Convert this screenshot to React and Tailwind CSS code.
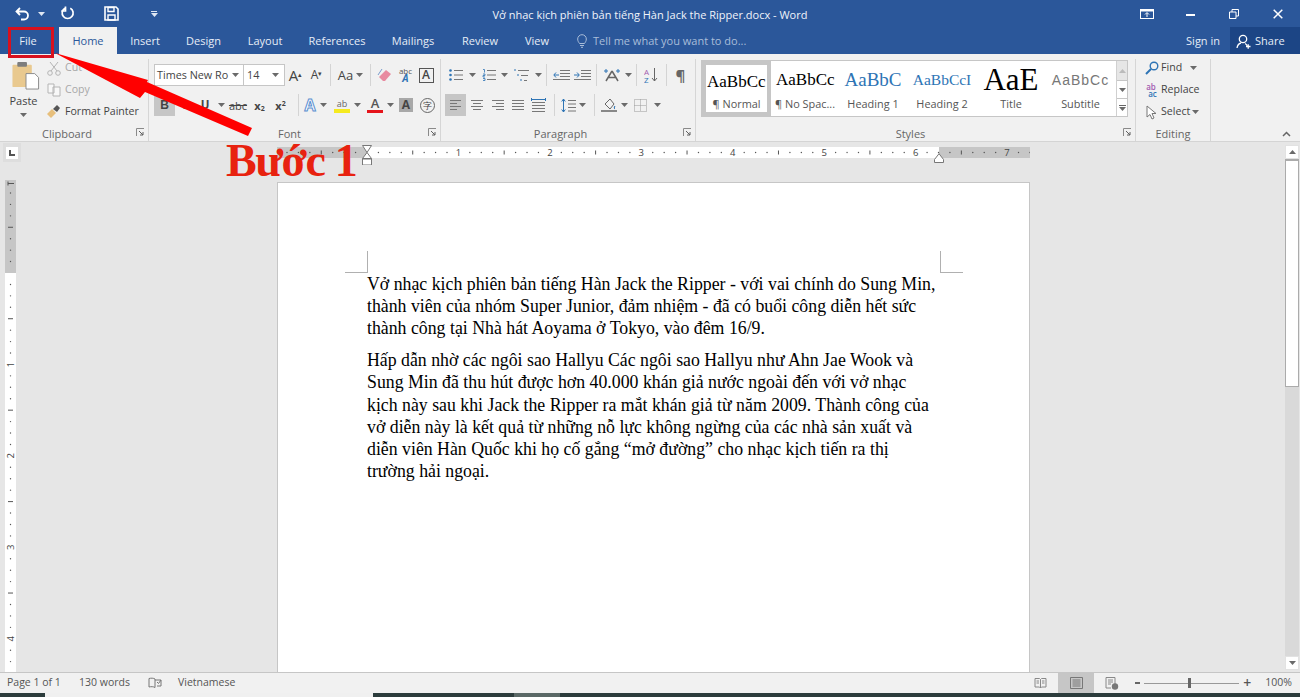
import React from "react";

const UI = "font-['Open_Sans',sans-serif]";

function Caret({ c = "#6a6a6a" }) {
  return <svg width="7" height="4" viewBox="0 0 7 4" className="shrink-0"><path d="M0 0h7L3.5 4z" fill={c} /></svg>;
}
function Sep() {
  return <div className="w-px h-[22px] bg-[#d4d4d4] mx-[3px] shrink-0" />;
}
function Cell({ w, children, active }) {
  return <div className={`${w} h-[22px] flex items-center justify-center shrink-0 ${active ? "bg-[#c6c6c6]" : ""}`}>{children}</div>;
}
function Launcher() {
  return (
    <svg width="9" height="9" viewBox="0 0 9 9" className="shrink-0">
      <path d="M.5 8V.5H8" fill="none" stroke="#8a8a8a" />
      <path d="M3 3l4 4M7 4v3H4" fill="none" stroke="#5f5f5f" />
    </svg>
  );
}
function Lines({ kind }) {
  const rows = {
    left: [[1, 12], [1, 8], [1, 12], [1, 8]],
    center: [[1, 13], [3, 11], [1, 13], [3, 11]],
    right: [[1, 13], [5, 13], [1, 13], [5, 13]],
    justify: [[1, 13], [1, 13], [1, 13], [1, 13]],
  }[kind];
  return (
    <svg width="14" height="12" viewBox="0 0 14 12">
      {rows.map((r, i) => <path key={i} d={`M${r[0]} ${1.5 + i * 3}H${r[1]}`} stroke="#777" strokeWidth="1" />)}
    </svg>
  );
}
function Group({ w, label, launcher, children }) {
  return (
    <div className={`${w} h-full shrink-0 flex flex-col border-r border-[#d6d6d6]`}>
      <div className="flex-1 min-h-0">{children}</div>
      <div className="relative h-[18px] pt-[2px] flex items-center justify-center text-[11px] leading-none text-[#666]">
        {label}
        {launcher && <span className="absolute right-[3px] top-[5px] flex"><Launcher /></span>}
      </div>
    </div>
  );
}
function SmallBtn({ icon, text, grey, caret, gap = "gap-[4px]" }) {
  return (
    <div className={`h-[22px] flex items-center ${gap} text-[10.6px] ${grey ? "text-[#a8a8a8]" : "text-[#444]"}`}>
      <span className="w-[15px] h-[16px] flex items-center justify-center shrink-0">{icon}</span>
      <span className="whitespace-nowrap">{text}</span>
      {caret}
    </div>
  );
}
function StyleItem({ w, preview, label, selected, left }) {
  return (
    <div className={`${w} h-full shrink-0 flex flex-col items-center overflow-hidden ${selected ? "border-[4px] border-[#c6c6c6]" : ""}`}>
      <div className={`${selected ? "h-[34px]" : "h-[38px]"} w-full overflow-hidden flex items-center ${left ? "justify-start" : "justify-center"} whitespace-nowrap`}>{preview}</div>
      <div className="text-[10.9px] leading-none text-[#555] whitespace-nowrap">{label}</div>
    </div>
  );
}
function Tab({ children, w, active }) {
  return (
    <div className={`${w} h-full pt-[1px] flex items-center justify-center shrink-0 text-[11px] ${active ? "bg-[#f1f1f1] text-[#2b579a]" : "text-[#e6edf7]"}`}>{children}</div>
  );
}

function HRuler() {
  const ticks = [];
  for (let i = -11; i < 59; i++) {
    const x = 90 + i * 11.43;
    if (i === 0) continue;
    if (i % 8 === 0 && i > 0) {
      ticks.push(<text key={i} x={x} y="9" fontSize="9.5" textAnchor="middle" fill="#444" fontFamily="Open Sans">{i / 8}</text>);
    } else if (i % 4 === 0) {
      ticks.push(<path key={i} d={`M${x} 3.5v4`} stroke="#555" />);
    } else {
      ticks.push(<circle key={i} cx={x} cy="5.5" r=".7" fill="#555" />);
    }
  }
  return (
    <svg width="753" height="11" viewBox="0 0 753 11" className="block">
      <rect x="0" width="753" height="11" fill="#c6c6c6" />
      <rect x="90" width="572" height="11" fill="#fff" />
      {ticks}
    </svg>
  );
}
function VRuler() {
  const ticks = [];
  for (let i = -7; i < 36; i++) {
    const y = 93 + i * 11.43;
    if (i === 0) continue;
    if (i % 8 === 0) {
      ticks.push(<text key={i} x="0" y="0" fontSize="9.5" textAnchor="middle" fill="#444" fontFamily="Open Sans" transform={`translate(8.5 ${y}) rotate(-90)`}>{i / 8}</text>);
    } else if (i % 4 === 0) {
      ticks.push(<path key={i} d={`M3 ${y}h5`} stroke="#555" />);
    } else {
      ticks.push(<circle key={i} cx="5.5" cy={y} r=".7" fill="#555" />);
    }
  }
  return (
    <svg width="11" height="492" viewBox="0 0 11 492" className="block">
      <rect width="11" height="492" fill="#fff" />
      <rect width="11" height="93" fill="#c6c6c6" />
      <path d="M3 3.5h6M3 1.5v4" stroke="#555" />
      {ticks}
    </svg>
  );
}

export default function App() {
  return (
    <div className={`relative w-[1300px] h-[697px] overflow-hidden flex flex-col bg-[#e6e6e6] ${UI}`}>
      {/* Title bar */}
      <div className="h-[27px] shrink-0 bg-[#2b579a] flex items-center text-white relative">
        <div className="w-[38px] pl-[15px] flex items-center">
          <svg width="15" height="14" viewBox="0 0 15 14"><path d="M5 1L1.5 4.5 5 8M2 4.5h7a4 4 0 0 1 0 8H6" fill="none" stroke="#fff" strokeWidth="1.8" /></svg>
        </div>
        <Caret c="#dfe7f3" />
        <div className="ml-[15px] w-[18px]">
          <svg width="15" height="15" viewBox="0 0 15 15"><path d="M5 2.2a5.5 5.5 0 1 0 5.3 0M5.5 .5v4.5H1.2" fill="none" stroke="#fff" strokeWidth="1.7" /></svg>
        </div>
        <div className="ml-[26px] w-[15px]">
          <svg width="15" height="15" viewBox="0 0 15 15"><path d="M1 1h11l2 2v11H1z" fill="none" stroke="#fff" strokeWidth="1.6" /><path d="M4 1.5h6v4H4zM4 9h7v5H4z" fill="none" stroke="#fff" strokeWidth="1.4" /></svg>
        </div>
        <div className="ml-[31px] w-[8px] flex flex-col items-center gap-[1px]">
          <div className="w-[6px] h-px bg-[#dfe7f3]" /><Caret c="#dfe7f3" />
        </div>
        <div className="absolute left-[0px] right-[0px] top-[0px] h-full flex items-center justify-center pt-[4px] text-[11px] text-[#f0f4fa] pointer-events-none">
          <span>Vở nhạc kịch phiên bản tiếng Hàn Jack the Ripper.docx - Word</span>
        </div>
        <div className="ml-auto flex items-center">
          <div className="w-[14px] mr-[32px]">
            <svg width="14" height="10" viewBox="0 0 14 10"><rect x=".5" y=".5" width="13" height="9" fill="none" stroke="#fff" /><rect x=".5" y=".5" width="13" height="2" fill="#fff" /><path d="M7 8V4M5 5.5L7 3.5l2 2" stroke="#fff" fill="none" /></svg>
          </div>
          <div className="w-[9px] h-[2px] bg-white mr-[34px] mt-[3px]" />
          <div className="mr-[34px]">
            <svg width="10" height="10" viewBox="0 0 10 10"><path d="M.5 3h6.5v6.500H.5zM3 3V.5h6.500V7H7" fill="none" stroke="#fff" /></svg>
          </div>
          <div className="mr-[17px]">
            <svg width="10" height="10" viewBox="0 0 10 10"><path d="M.7.7l8.600 8.600M9.300.7L.7 9.300" stroke="#fff" strokeWidth="1.500" /></svg>
          </div>
        </div>
      </div>

      {/* Tabs */}
      <div className="h-[27px] shrink-0 bg-[#2b579a] flex items-stretch">
        <Tab w="w-[56px]">File</Tab>
        <div className="w-[3px] shrink-0" />
        <Tab w="w-[58px]" active>Home</Tab>
        <Tab w="w-[56px]">Insert</Tab>
        <Tab w="w-[61px]">Design</Tab>
        <Tab w="w-[62px]">Layout</Tab>
        <Tab w="w-[82px]">References</Tab>
        <Tab w="w-[70px]">Mailings</Tab>
        <Tab w="w-[64px]">Review</Tab>
        <Tab w="w-[50px]">View</Tab>
        <div className="flex items-center gap-[6px] ml-[15px] pt-[1px] text-[11px] text-[#a9bdd9]">
          <svg width="10" height="14" viewBox="0 0 10 14"><path d="M2.500 9.500C1.500 8 .7 7 .7 5a4.300 4.300 0 0 1 8.600 0c0 2-.8 3-1.800 4.500zM3 11.500h4M4 13.300h2" fill="none" stroke="#a9bdd9" /></svg>
          <span>Tell me what you want to do...</span>
        </div>
        <div className="ml-auto flex items-stretch">
          <div className="flex items-center pr-[10px] pt-[1px] text-[11px] text-[#e6edf7]">Sign in</div>
          <div className="w-[70px] bg-[#1c4585] flex items-center gap-[4px] pl-[6px] pt-[1px] text-[11px] text-[#e6edf7]">
            <svg width="15" height="15" viewBox="0 0 15 15"><circle cx="7" cy="5" r="3.700" fill="none" stroke="#fff" strokeWidth="1.300" /><path d="M1 14c.5-3 2-4.500 4-5M9 9.500c1 .5 1.500 1 2 2M10 12.500h4.500M12.200 10.300v4.400" fill="none" stroke="#fff" strokeWidth="1.300" /></svg>
            <span>Share</span>
          </div>
        </div>
      </div>

      {/* Ribbon */}
      <div className="h-[88px] shrink-0 bg-[#f1f1f1] border-b border-[#d4d4d4] flex pt-[5px] text-[#444]">
        {/* Clipboard */}
        <Group w="w-[149px]" label={<span className="mr-[14px]">Clipboard</span>} launcher>
          <div className="flex h-full">
            <div className="w-[47px] flex flex-col items-center pt-[2px]">
              <svg width="28" height="29" viewBox="0 0 28 30" className="ml-[4px]">
                <rect x="0" y="4" width="20" height="23" rx="1" fill="#e9c98f" />
                <rect x="5" y="1" width="10" height="5" rx="1" fill="#7d7d7d" />
                <path d="M14 13h9l4 4v12H14z" fill="#fff" stroke="#8a8a8a" />
              </svg>
              <div className="text-[11px] leading-none mt-[5px]">Paste</div>
              <div className="mt-[7px]"><Caret /></div>
            </div>
            <div className="flex flex-col mt-[-2px] ml-[-1px]">
              <SmallBtn grey text="Cut" icon={<svg width="14" height="15" viewBox="0 0 14 15"><circle cx="3" cy="12" r="2.300" fill="none" stroke="#b4b4b4" /><circle cx="11" cy="12" r="2.300" fill="none" stroke="#b4b4b4" /><path d="M4 10L11 1M10 10L3 1" stroke="#b4b4b4" /></svg>} />
              <SmallBtn grey text="Copy" icon={<svg width="14" height="14" viewBox="0 0 14 14"><path d="M1 1h6v9H1zM6 4h7v9H6z" fill="#f8f8f8" stroke="#b4b4b4" /></svg>} />
              <SmallBtn text="Format Painter" icon={<svg width="15" height="14" viewBox="0 0 15 14"><path d="M1 9l5-5 4 4-5 5z" fill="#e7bf7c" /><path d="M7 4l4-4 3 3-3 4z" fill="#555" /></svg>} />
            </div>
          </div>
        </Group>

        {/* Font */}
        <Group w="w-[292px]" label={<span className="ml-[-10px]">Font</span>} launcher>
          <div className="pl-[5px] flex flex-col pt-[4px] gap-[7px]">
            <div className="flex items-center h-[24px]">
              <div className="w-[90px] h-[22px] bg-white border border-[#c6c6c6] flex items-center justify-between pl-[2px] pr-[4px] text-[10.8px] text-[#444] whitespace-nowrap">Times New Ro<Caret /></div>
              <div className="w-[41px] h-[22px] bg-white border border-l-0 border-[#c6c6c6] flex items-center justify-between pl-[3px] pr-[5px] text-[10.8px]">14<Caret /></div>
              <Cell w="w-[21px]"><span className="text-[15px] leading-none">A<sup className="text-[7px]">▴</sup></span></Cell>
              <Cell w="w-[21px]"><span className="text-[12px] leading-none">A<sup className="text-[7px]">▾</sup></span></Cell>
              <Sep />
              <Cell w="w-[33px]"><span className="flex items-center gap-[3px] text-[13px] leading-none">Aa<Caret /></span></Cell>
              <Sep />
              <Cell w="w-[21px]">
                <svg width="16" height="14" viewBox="0 0 16 14"><path d="M6 13l-4-4 7-7 5 4-6 7z" fill="#e88aa0" /><path d="M1 7l4-6" stroke="#7a9ccc" /></svg>
              </Cell>
              <Cell w="w-[21px]"><span className="flex flex-col items-center text-[8px] leading-[7px] text-[#555]">abc<b className="text-[#2e74b5] italic text-[10px] leading-[9px]">A</b></span></Cell>
              <Cell w="w-[20px]"><span className="w-[15px] h-[15px] border border-[#555] flex items-center justify-center text-[12px] leading-none font-semibold">A</span></Cell>
            </div>
            <div className="flex items-center h-[22px]">
              <Cell w="w-[21px]" active><b className="text-[12px] leading-none font-['Liberation_Sans',sans-serif]">B</b></Cell>
              <Cell w="w-[20px]"><i className="text-[12px] leading-none font-['Liberation_Serif',serif]">I</i></Cell>
              <Cell w="w-[20px]"><b className="underline text-[11.5px] leading-none">U</b></Cell>
              <Cell w="w-[12px]"><Caret /></Cell>
              <Cell w="w-[22px]"><span className="line-through text-[11px] leading-none">abc</span></Cell>
              <Cell w="w-[21px]"><b className="text-[11px] leading-none">x<sub className="text-[7px]">2</sub></b></Cell>
              <Cell w="w-[21px]"><b className="text-[11px] leading-none">x<sup className="text-[7px]">2</sup></b></Cell>
              <div className="ml-[4px]"><Sep /></div>
              <Cell w="w-[16px]"><b className="text-[16px] leading-none text-white [-webkit-text-stroke:1px_#5b8fd0]">A</b></Cell>
              <Cell w="w-[10px]"><Caret /></Cell>
              <Cell w="w-[24px] ml-[2px]">
                <span className="flex flex-col items-center leading-none">
                  <span className="text-[9px] leading-[11px] text-[#666]">ab</span>
                  <span className="w-[16px] h-[4px] bg-[#f5ea1f]" />
                </span>
              </Cell>
              <Cell w="w-[6px]"><Caret /></Cell>
              <Cell w="w-[24px] ml-[3px]">
                <span className="flex flex-col items-center leading-none">
                  <span className="text-[13px] leading-[13px] font-semibold text-[#555]">A</span>
                  <span className="w-[16px] h-[3px] bg-[#e5141b]" />
                </span>
              </Cell>
              <Cell w="w-[6px]"><Caret /></Cell>
              <Cell w="w-[26px]"><span className="w-[14px] h-[14px] bg-[#a8a8a8] flex items-center justify-center text-[12px] font-bold leading-none text-[#444]">A</span></Cell>
              <Cell w="w-[16px]"><span className="w-[15px] h-[15px] rounded-full border border-[#666] flex items-center justify-center text-[9px] leading-none">字</span></Cell>
            </div>
          </div>
        </Group>

        {/* Paragraph */}
        <Group w="w-[255px]" label={<span className="ml-[-15px]">Paragraph</span>} launcher>
          <div className="pl-[4px] flex flex-col pt-[4px] gap-[7px]">
            <div className="flex items-center h-[24px]">
              <Cell w="w-[22px]"><svg width="14" height="12" viewBox="0 0 14 12"><path d="M5 1.500h9M5 6h9M5 10.500h9" stroke="#777" /><circle cx="1.500" cy="1.500" r="1.300" fill="#2e74b5" /><circle cx="1.500" cy="6" r="1.300" fill="#2e74b5" /><circle cx="1.500" cy="10.500" r="1.300" fill="#2e74b5" /></svg></Cell>
              <Cell w="w-[11px]"><Caret /></Cell>
              <Cell w="w-[22px]"><svg width="14" height="12" viewBox="0 0 14 12"><path d="M5 1.500h9M5 6h9M5 10.500h9" stroke="#777" /><path d="M1 .5h1.500v3M1 5h2v1.500H1V8h2M1 9.500h2v2H1" fill="none" stroke="#2e74b5" strokeWidth=".8" /></svg></Cell>
              <Cell w="w-[9px]"><Caret /></Cell>
              <Cell w="w-[24px]"><svg width="16" height="13" viewBox="0 0 16 13"><path d="M5 1.500h11M8 6.500h7M11 11.500h3" stroke="#777" /><path d="M1 1h2M4 6h2M7 11h2" stroke="#2e74b5" /></svg></Cell>
              <Cell w="w-[10px]"><Caret /></Cell>
              <Sep />
              <Cell w="w-[22px]"><svg width="17" height="12" viewBox="0 0 17 12"><path d="M7 1.500h10M7 4.500h10M7 7.500h10M0 10.500h17" stroke="#777" /><path d="M6 6H1M3 3.500L.8 6 3 8.500" fill="none" stroke="#2e74b5" /></svg></Cell>
              <Cell w="w-[21px]"><svg width="17" height="12" viewBox="0 0 17 12"><path d="M7 1.500h10M7 4.500h10M7 7.500h10M0 10.500h17" stroke="#777" /><path d="M0 6h5M3 3.500L5.300 6 3 8.500" fill="none" stroke="#2e74b5" /></svg></Cell>
              <Sep />
              <Cell w="w-[24px]"><svg width="18" height="14" viewBox="0 0 18 14"><path d="M9 3L3 13M9 3l6 10M5 9.500h8" fill="none" stroke="#666" strokeWidth="1.500" /><path d="M1 3h4M13 3h4M3 1v4M15 1v4" stroke="#2e74b5" /></svg></Cell>
              <Cell w="w-[8px]"><Caret /></Cell>
              <div className="ml-[1px]"><Sep /></div>
              <Cell w="w-[22px]"><svg width="14" height="17" viewBox="0 0 14 17"><text x="0" y="8" fontSize="8" fill="#a25bb0" fontFamily="Open Sans">A</text><text x="0" y="16" fontSize="8" fill="#2e74b5" fontFamily="Open Sans">Z</text><path d="M10.500 1v13M8 11l2.500 3 2.500-3" fill="none" stroke="#666" /></svg></Cell>
              <div className="ml-[1px]"><Sep /></div>
              <Cell w="w-[21px]"><span className="text-[15px] font-bold leading-none text-[#666]">¶</span></Cell>
            </div>
            <div className="flex items-center h-[22px]">
              <Cell w="w-[21px]" active><Lines kind="left" /></Cell>
              <Cell w="w-[21px]"><Lines kind="center" /></Cell>
              <Cell w="w-[21px]"><Lines kind="right" /></Cell>
              <Cell w="w-[20px]"><Lines kind="justify" /></Cell>
              <Cell w="w-[21px]"><svg width="15" height="15" viewBox="0 0 15 15"><path d="M1 4.500h13M1 7.500h13M1 10.500h13M1 13.500h13" stroke="#777" /><path d="M.5 0v3M14.500 0v3M1 1.500h13" stroke="#2e74b5" /></svg></Cell>
              <div className="ml-[2px]"><Sep /></div>
              <Cell w="w-[19px] ml-[1px]"><svg width="15" height="15" viewBox="0 0 15 15"><path d="M7 2.500h8M7 6h8M7 9.500h8M7 13h8" stroke="#777" /><path d="M2.500 1v13M.7 3.500L2.500 1l1.800 2.500M.7 11.500L2.500 14l1.800-2.500" fill="none" stroke="#2e74b5" /></svg></Cell>
              <Cell w="w-[8px]"><Caret /></Cell>
              <div className="ml-[5px]"><Sep /></div>
              <Cell w="w-[22px]"><span className="flex flex-col items-center"><svg width="15" height="12" viewBox="0 0 15 12"><path d="M3 6l5-5 4 5-4 5z" fill="#f3f3f3" stroke="#666" /><path d="M13 8c-1 1.500-1 2.500 0 3" fill="#2e74b5" stroke="#2e74b5" /></svg><span className="w-[16px] h-[2px] bg-[#888]" /></span></Cell>
              <Cell w="w-[9px]"><Caret /></Cell>
              <Cell w="w-[23px]"><svg width="13" height="13" viewBox="0 0 13 13"><path d="M.5.500h12v12H.5zM6.500.5v12M.5 6.500h12" fill="none" stroke="#999" strokeDasharray="1 1" /></svg></Cell>
              <Cell w="w-[10px]"><Caret /></Cell>
            </div>
          </div>
        </Group>

        {/* Styles */}
        <Group w="w-[440px]" label={<span className="ml-[-10px]">Styles</span>} launcher>
          <div className="pl-[5px] pt-[1px]">
            <div className="h-[57px] w-[427px] border border-[#c6c6c6] bg-white flex">
              <StyleItem selected left w="w-[69px]" label="¶ Normal" preview={<span className="font-['Liberation_Serif',serif] text-[17px] text-black pl-[1px]">AaBbCc</span>} />
              <StyleItem left w="w-[68px]" label="¶ No Spac..." preview={<span className="font-['Liberation_Serif',serif] text-[17px] text-black pl-[5px]">AaBbCc</span>} />
              <StyleItem w="w-[68px]" label="Heading 1" preview={<span className="font-['Liberation_Serif',serif] text-[19px] text-[#2e74b5]">AaBbC</span>} />
              <StyleItem w="w-[70px]" label="Heading 2" preview={<span className="font-['Liberation_Serif',serif] text-[15.500px] text-[#2e74b5]">AaBbCcI</span>} />
              <StyleItem w="w-[68px]" label="Title" preview={<span className="font-['Liberation_Serif',serif] text-[31px] text-black">AaE</span>} />
              <StyleItem w="w-[71px]" label="Subtitle" preview={<span className="font-['Liberation_Sans',sans-serif] text-[14px] tracking-[1px] text-[#777]">AaBbCc</span>} />
              <div className="flex-1 flex flex-col border-l border-[#d0d0d0]">
                <div className="h-[19px] bg-[#e6e6e6] flex items-center justify-center"><span className="rotate-180 flex"><Caret c="#bbb" /></span></div>
                <div className="h-[19px] border-y border-[#c6c6c6] flex items-center justify-center"><Caret /></div>
                <div className="flex-1 flex flex-col items-center justify-center gap-[1px]"><div className="w-[7px] h-px bg-[#666]" /><Caret /></div>
              </div>
            </div>
          </div>
        </Group>

        {/* Editing */}
        <Group w="w-[75px]" label={<span>Editing</span>}>
          <div className="pl-[8px] flex flex-col mt-[-2px]">
            <SmallBtn gap="gap-[2px]" text="Find" caret={<span className="ml-[6px]"><Caret /></span>} icon={<svg width="14" height="14" viewBox="0 0 14 14"><circle cx="9" cy="5" r="3.800" fill="none" stroke="#2e74b5" strokeWidth="1.400" /><path d="M6 8l-5 5" stroke="#2e74b5" strokeWidth="2" /></svg>} />
            <SmallBtn gap="gap-[2px]" text="Replace" icon={<span className="flex flex-col text-[8px] leading-[7px] font-semibold"><span className="text-[#a25bb0]">ab</span><span className="text-[#2e74b5] pl-[2px]">ac</span></span>} />
            <SmallBtn gap="gap-[2px]" text="Select" caret={<Caret />} icon={<svg width="11" height="15" viewBox="0 0 11 15"><path d="M1 1v11l3-2.500 2 4.500 2-1-2-4.500h4z" fill="#fff" stroke="#777" /></svg>} />
          </div>
        </Group>

        <div className="flex-1 flex items-end justify-end pr-[9px] pb-[4px]">
          <svg width="9" height="6" viewBox="0 0 9 6"><path d="M1 5l3.500-3.500L8 5" fill="none" stroke="#666" strokeWidth="1.500" /></svg>
        </div>
      </div>

      {/* Document area */}
      <div className="flex-1 min-h-0 flex bg-[#e6e6e6]">
        <div className="w-[277px] shrink-0 pl-[3px] pt-[1px]">
          <div className="w-[18px] h-[19px] bg-[#dedede] flex items-center justify-center">
            <div className="w-[12px] h-[12px] bg-white flex items-center justify-center">
              <div className="w-[6px] h-[6px] border-l-2 border-b-2 border-[#555]" />
            </div>
          </div>
          <div className="ml-[2px] mt-[18px]"><VRuler /></div>
        </div>
        <div className="w-[753px] shrink-0 flex flex-col min-h-0 relative">
          <div className="mt-[5px] h-[11px] shrink-0"><HRuler /></div>
          <div className="absolute left-[85px] top-[3px]">
            <svg width="10" height="20" viewBox="0 0 10 20"><path d="M.5.500h9L5 7.500zM5 7.500l4.500 6h-9z" fill="#fff" stroke="#777" /><rect x=".5" y="14" width="9" height="6" fill="#fff" stroke="#777" /></svg>
          </div>
          <div className="absolute left-[657px] top-[11px]">
            <svg width="10" height="10" viewBox="0 0 10 10"><path d="M.5 9.500v-3L5 .7l4.500 5.800v3z" fill="#fff" stroke="#777" /></svg>
          </div>
          <div className="mt-[24px] flex-1 min-h-0 bg-white border border-[#c6c6c6] border-b-0 pt-[68px] pl-[67px] pr-[66px] overflow-hidden">
            <div className="flex justify-between">
              <div className="w-[23px] h-[22px] border-r border-b border-[#b0b0b0]" />
              <div className="w-[23px] h-[22px] border-l border-b border-[#b0b0b0]" />
            </div>
            <div className="pl-[22px] font-['Liberation_Serif',serif] text-[17.800px] leading-[22.200px] text-black whitespace-nowrap">
              <p>Vở nhạc kịch phiên bản tiếng Hàn Jack the Ripper - với vai chính do Sung Min,</p>
              <p>thành viên của nhóm Super Junior, đảm nhiệm - đã có buổi công diễn hết sức</p>
              <p className="mb-[9.500px]">thành công tại Nhà hát Aoyama ở Tokyo, vào đêm 16/9.</p>
              <p>Hấp dẫn nhờ các ngôi sao Hallyu Các ngôi sao Hallyu như Ahn Jae Wook và</p>
              <p>Sung Min đã thu hút được hơn 40.000 khán giả nước ngoài đến với vở nhạc</p>
              <p>kịch này sau khi Jack the Ripper ra mắt khán giả từ năm 2009. Thành công của</p>
              <p>vở diễn này là kết quả từ những nỗ lực không ngừng của các nhà sản xuất và</p>
              <p>diễn viên Hàn Quốc khi họ cố gắng “mở đường” cho nhạc kịch tiến ra thị</p>
              <p>trường hải ngoại.</p>
            </div>
          </div>
        </div>
        <div className="flex-1 flex justify-end pr-[1px] pt-[3px]">
          <div className="w-[14px] h-[525px] bg-[#d9d9d9] flex flex-col">
            <div className="h-[14px] bg-white border border-[#e2e2e2] flex items-center justify-center"><span className="rotate-180 flex"><Caret /></span></div>
            <div className="h-[228px] bg-white border border-[#ababab] border-t-2" />
            <div className="flex-1" />
            <div className="h-[14px] bg-white border border-[#e2e2e2] flex items-center justify-center"><Caret /></div>
          </div>
        </div>
      </div>

      {/* Status bar */}
      <div className="h-[21px] shrink-0 bg-[#f1f1f1] border-t border-[#c6c6c6] flex items-center text-[10.500px] text-[#555]">
        <span className="ml-[7px] w-[72px]">Page 1 of 1</span>
        <span className="w-[69px]">130 words</span>
        <svg width="14" height="13" viewBox="0 0 14 13"><path d="M7 2C5.500 1 3 1 1 1.500V10c2-.5 4.500-.5 6 .5V2zM7 3h6v6H9" fill="none" stroke="#777" /><path d="M9 5l1.500 1.500L13 3" fill="none" stroke="#777" /></svg>
        <span className="ml-[16px]">Vietnamese</span>
        <div className="ml-auto flex items-center h-full">
          <div className="w-[36px] flex justify-center"><svg width="13" height="12" viewBox="0 0 13 12"><path d="M1 1.500h4.500l1 1 1-1H12V10H7.500l-1 1-1-1H1zM6.500 2.500V11M2.500 4h2.500M2.500 6h2.500M8 4h2.500M8 6h2.500" fill="none" stroke="#888" /></svg></div>
          <div className="w-[36px] h-full bg-[#c6c6c6] flex items-center justify-center"><svg width="13" height="12" viewBox="0 0 13 12"><path d="M.5.500h12v11H.5zM2.500 3h8M2.500 5h8M2.500 7h8M2.500 9h8" fill="none" stroke="#777" /></svg></div>
          <div className="w-[36px] flex justify-center"><svg width="14" height="13" viewBox="0 0 14 13"><path d="M1 .5h9V7M1 .5V11h5M3 3h5M3 5h5M3 7h3" fill="none" stroke="#888" /><circle cx="10" cy="9.500" r="3.200" fill="#777" /></svg></div>
          <div className="w-[5px] h-[2px] bg-[#666] ml-[5px]" />
          <div className="w-[95px] h-px bg-[#999] mx-[4px] relative flex items-center justify-center">
            <div className="absolute left-[44px] w-[3px] h-[10px] bg-[#666]" />
          </div>
          <span className="text-[14px] leading-none text-[#555] font-semibold mr-[14px]">+</span>
          <span className="mr-[8px]">100%</span>
        </div>
      </div>
      <div className="h-[4px] shrink-0 flex bg-[#2c3c3c]">
        <div className="w-[45px]" />
        <div className="w-[328px] bg-[#f0f0f0]" />
        <div className="w-[141px]" />
        <div className="w-[46px] bg-[#5a6866]" />
      </div>

      {/* Annotations */}
      <div className="absolute left-[8px] top-[27px] w-[46px] h-[31px] border-[3px] border-[#d8111e]" />
      <svg width="260" height="140" viewBox="0 0 260 140" className="absolute left-[0px] top-[0px] pointer-events-none">
        <path d="M55 53L148 80L147 82L252 128L248 136L145 92L140 98Z" fill="#f00" />
      </svg>
      <div className="absolute left-[226px] top-[133px] font-['Liberation_Serif',serif] font-bold text-[46px] tracking-[-1.400px] leading-[56px] text-[#e8220f] whitespace-nowrap">Bước 1</div>
    </div>
  );
}
